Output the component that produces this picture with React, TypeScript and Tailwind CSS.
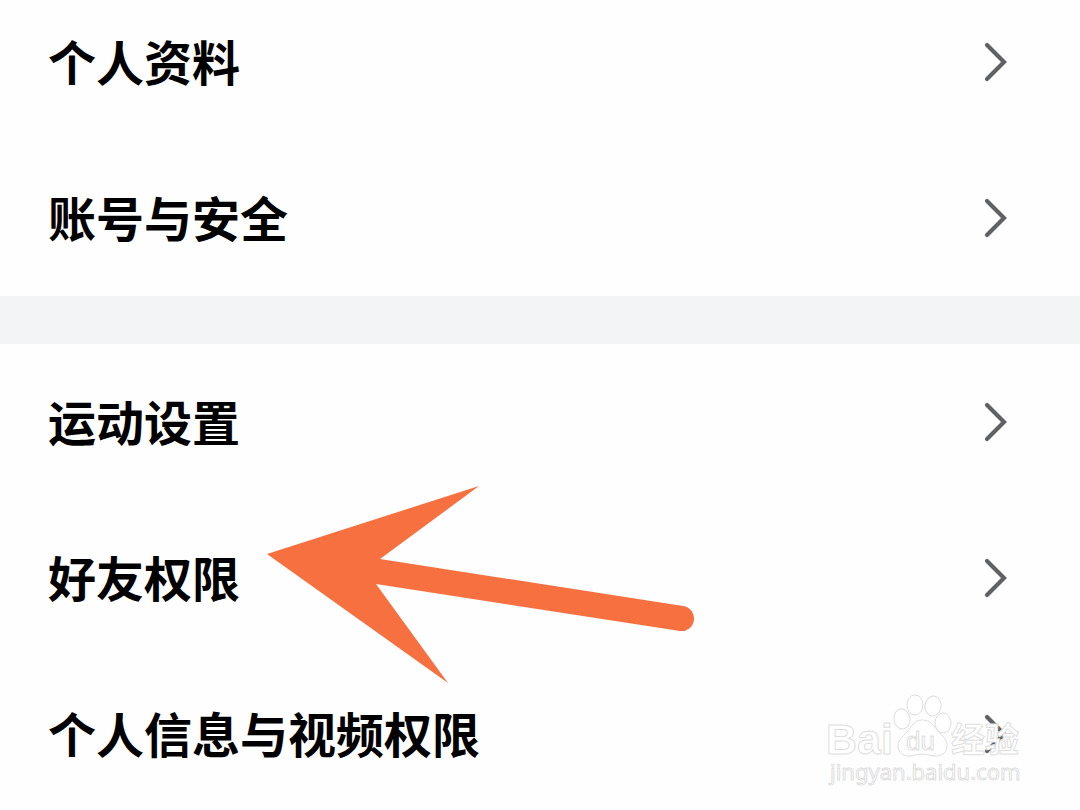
type Item = { label: string };

const groups: Item[][] = [
  [{ label: "个人资料" }, { label: "账号与安全" }],
  [{ label: "运动设置" }, { label: "好友权限" }, { label: "个人信息与视频权限" }],
];

function Chevron() {
  return (
    <svg width="24" height="40" viewBox="0 0 24 40" fill="none" aria-hidden="true">
      <path
        d="M3 3L20 20L3 37"
        stroke="#606164"
        strokeWidth="4.2"
        strokeLinecap="round"
      />
    </svg>
  );
}

function SettingRow({ label }: Item) {
  return (
    <li>
      <button
        type="button"
        className="flex h-39 w-full items-center justify-between pr-18 pl-12 text-left"
      >
        <span className="pb-1 text-5xl font-bold text-black">{label}</span>
        <Chevron />
      </button>
    </li>
  );
}

function PointerArrow() {
  return (
    <svg
      className="pointer-events-none absolute top-[486px] left-[266px]"
      width="430"
      height="198"
      viewBox="266 486 430 198"
      aria-hidden="true"
    >
      <path
        d="M267 554L479 486L380 559L683 606A12.5 12.5 0 0 1 680 631L376 584L448 683Z"
        fill="#f67040"
      />
    </svg>
  );
}

function Watermark() {
  return (
    <svg
      className="pointer-events-none absolute top-[690px] right-[50px]"
      width="210"
      height="100"
      viewBox="820 690 210 100"
      fill="#fff"
      stroke="#dedede"
      strokeLinejoin="round"
      role="img"
      aria-label="Baidu 经验"
    >
      <text
        x="826"
        y="754"
        fontSize="43"
        fontWeight="bold"
        fontFamily="'Liberation Sans', Arial, sans-serif"
      >
        Bai
      </text>
      <ellipse cx="902" cy="719" rx="8" ry="10" transform="rotate(-8 902 719)" />
      <ellipse cx="915" cy="705" rx="8" ry="10" />
      <ellipse cx="933" cy="706" rx="8" ry="10" transform="rotate(10 933 706)" />
      <ellipse cx="943" cy="723" rx="8" ry="10" />
      <path d="M922 720C914 720 911 727 907 732C902 737 898 740 898 746C898 753 903 756 909 756C914 756 917 754 922 754C927 754 931 756 936 756C943 756 947 752 947 745C947 739 942 736 938 731C934 726 930 720 922 720Z" />
      <text
        x="906"
        y="750"
        fontSize="26"
        fontFamily="'Liberation Sans', Arial, sans-serif"
      >
        du
      </text>
      <text
        x="951"
        y="752"
        fontSize="34"
        fontWeight="bold"
        fontFamily="'Noto Sans CJK SC', sans-serif"
      >
        经验
      </text>
      <text x="830" y="780" fontSize="22" fontFamily="'Noto Sans', sans-serif">
        jingyan.baidu.com
      </text>
    </svg>
  );
}

export default function App() {
  return (
    <main className="relative h-screen overflow-hidden bg-[#fefefe] font-['Noto_Sans_CJK_SC',sans-serif]">
      <div className="-mt-4 divide-y-48 divide-[#f3f4f6]">
        {groups.map((items) => (
          <ul key={items[0].label}>
            {items.map((item) => (
              <SettingRow key={item.label} label={item.label} />
            ))}
          </ul>
        ))}
      </div>
      <PointerArrow />
      <Watermark />
    </main>
  );
}
